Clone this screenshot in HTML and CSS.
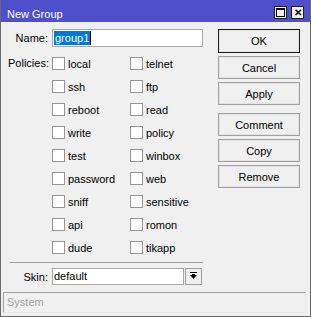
FILE: index.html
```html
<!DOCTYPE html>
<html lang="en">
<head>
  <meta charset="UTF-8">
  <title>New Group</title>
  <link rel="stylesheet" href="styles.css">
</head>
<body>

  <div class="window">
    <div class="titlebar">
      <span class="title">New Group</span>
      <div class="controls">
        <span class="ctl maximize"><span class="square"></span></span>
        <span class="ctl close">&#x2715;</span>
      </div>
    </div>

    <div class="content">
      <div class="form">
        <div class="row name-row">
          <span class="label">Name:</span>
          <div class="field name-field"><span class="sel">group1</span></div>
        </div>

        <div class="row policies-row">
          <span class="label policies-label">Policies:</span>
          <div class="policies">
            <label class="check"><input type="checkbox">local</label>
            <label class="check"><input type="checkbox">telnet</label>
            <label class="check"><input type="checkbox">ssh</label>
            <label class="check"><input type="checkbox">ftp</label>
            <label class="check"><input type="checkbox">reboot</label>
            <label class="check"><input type="checkbox">read</label>
            <label class="check"><input type="checkbox">write</label>
            <label class="check"><input type="checkbox">policy</label>
            <label class="check"><input type="checkbox">test</label>
            <label class="check"><input type="checkbox">winbox</label>
            <label class="check"><input type="checkbox">password</label>
            <label class="check"><input type="checkbox">web</label>
            <label class="check"><input type="checkbox">sniff</label>
            <label class="check"><input type="checkbox">sensitive</label>
            <label class="check"><input type="checkbox">api</label>
            <label class="check"><input type="checkbox">romon</label>
            <label class="check"><input type="checkbox">dude</label>
            <label class="check"><input type="checkbox">tikapp</label>
          </div>
        </div>

        <div class="separator"></div>

        <div class="row skin-row">
          <span class="label">Skin:</span>
          <div class="field skin-field">default</div>
          <span class="dropdown">
            <svg width="9" height="9" viewBox="0 0 9 9">
              <rect x="1" y="0" width="7" height="1" fill="#000"/>
              <polygon points="1,3 8,3 4.5,7" fill="#000"/>
              <rect x="3" y="2" width="3" height="2" fill="#000"/>
            </svg>
          </span>
        </div>
      </div>

      <!-- Dialog buttons -->
      <div class="actions">
        <button class="button default">OK</button>
        <button class="button">Cancel</button>
        <button class="button">Apply</button>
        <button class="button spaced">Comment</button>
        <button class="button">Copy</button>
        <button class="button">Remove</button>
      </div>
    </div>

    <div class="statusbar">System</div>
  </div>

</body>
</html>
```

FILE: styles.css
```css
* {
  margin: 0;
  padding: 0;
  box-sizing: border-box;
}

body {
  font-family: 'Liberation Sans', Arial, sans-serif;
  font-size: 11px;
  color: #000;
  background-color: #f0f0f0;
}

.window {
  width: 311px;
  height: 317px;
  display: flex;
  flex-direction: column;
  border: 1px solid #6a6a6a;
  border-top: none;
  background-color: #f0f0f0;
}

.titlebar {
  height: 22px;
  display: flex;
  justify-content: space-between;
  align-items: flex-start;
  background-color: #4f4fcc;
  color: #fff;
  padding: 8px 6px 0 6px;
  line-height: 13px;
}

.controls {
  display: flex;
  gap: 4px;
  margin-top: -2px;
}

.ctl {
  width: 13px;
  height: 13px;
  border: 1px solid #1e1e1e;
  background-color: #f0f0f0;
  display: flex;
  align-items: center;
  justify-content: center;
}

.maximize .square {
  width: 9px;
  height: 9px;
  border: 1px solid #000;
  border-top-width: 2px;
}

.close {
  color: #000;
  font-size: 10px;
  font-weight: bold;
  line-height: 11px;
}

.content {
  flex: 1;
  display: flex;
}

.form {
  width: 217px;
  padding-top: 7px;
}

.row {
  display: flex;
  align-items: center;
}

.label {
  width: 40px;
  margin-left: 7px;
  margin-right: 4px;
  text-align: right;
}

.field {
  height: 18px;
  background-color: #fff;
  border: 1px solid #a9a9a9;
  line-height: 16px;
  padding-left: 1px;
}

.name-field {
  width: 151px;
}

.sel {
  display: inline-block;
  background-color: #0078d7;
  color: #fff;
  line-height: 14px;
  padding: 0 1px;
  border-right: 1px solid #000;
}

.policies-row {
  align-items: flex-start;
  margin-top: 5px;
}

.policies-label {
  line-height: 23px;
}

.policies {
  display: grid;
  grid-template-columns: 78px 78px;
  grid-auto-rows: 23px;
}

.check {
  display: flex;
  align-items: center;
  gap: 3px;
}

.check input {
  appearance: none;
  width: 13px;
  height: 13px;
  border: 1px solid #959595;
  background-color: #fff;
  margin: 0;
}

.separator {
  height: 1px;
  margin: 3px 15px 5px 9px;
  background-color: #a0a0a0;
}

.skin-field {
  width: 132px;
  height: 17px;
  line-height: 15px;
}

.dropdown {
  width: 17px;
  height: 17px;
  margin-left: 1px;
  border: 1px solid #a0a0a0;
  background-color: #f0f0f0;
  display: flex;
  align-items: center;
  justify-content: center;
}

.actions {
  width: 82px;
  padding-top: 7px;
  display: flex;
  flex-direction: column;
  gap: 3px;
}

.button {
  height: 23px;
  font-family: inherit;
  font-size: 11px;
  color: #000;
  background-color: #f0f0f0;
  border: 1px solid #a0a0a0;
  box-shadow: inset 0 0 0 1px #e3e3e3;
}

.button.default {
  height: 24px;
  border-color: #1a1a1a;
}

.button.spaced {
  margin-top: 5px;
}

.statusbar {
  height: 21px;
  margin: 0 4px 3px 2px;
  border: 1px solid #a0a0a0;
  border-right-color: #e8e8e8;
  border-bottom-color: #e8e8e8;
  color: #a0a0a0;
  padding-left: 3px;
  line-height: 19px;
}
```
